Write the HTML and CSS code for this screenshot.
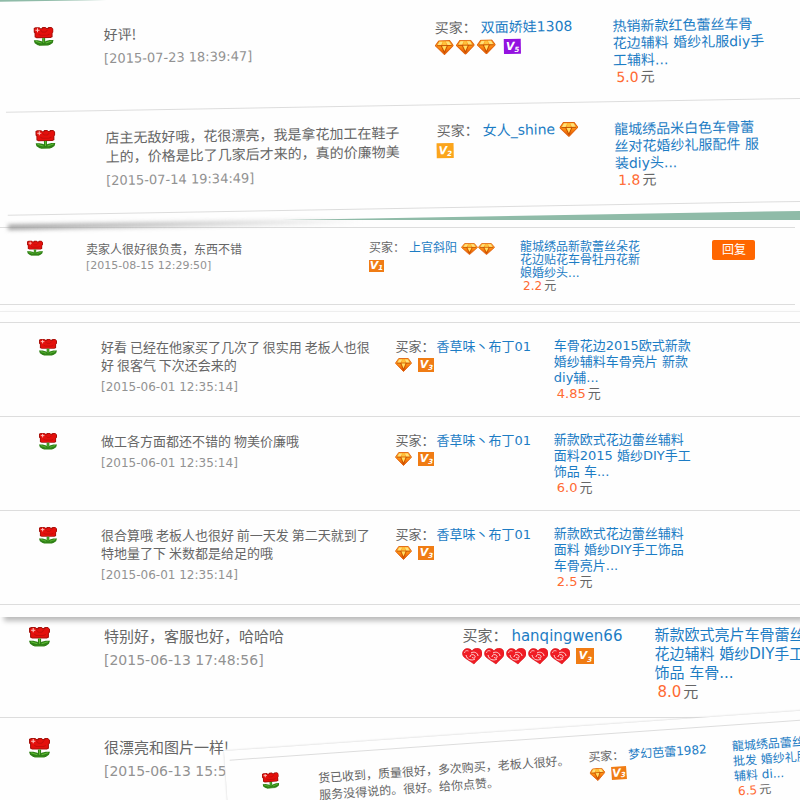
FILE: index.html
```
<!DOCTYPE html>
<html lang="zh-CN">

<head>
    <meta charset="UTF-8">
    <meta name="viewport" content="width=device-width, initial-scale=1.0">
    <title>买家评价</title>
    <link rel="stylesheet" href="styles.css">
</head>

<body>
    <!-- Icone -->
    <svg class="defs" aria-hidden="true">
        <defs>
            <linearGradient id="gold" x1="0" y1="0" x2="0" y2="1">
                <stop offset="0" stop-color="#ffb52e" />
                <stop offset="0.5" stop-color="#ff8a10" />
                <stop offset="1" stop-color="#d94a00" />
            </linearGradient>
        </defs>
        <symbol id="flower" viewBox="0 0 20 20">
            <path d="M2 1h4l1 1h1l1-1h3l1 1h1l1-1h3l2 2v3l-1 1v4l-2 1H3l-2-1V7L0 6V2z" fill="#a5120c" />
            <path d="M2 2h4l1 1h2l1-1h2l1 1h2l1-1h2l1 1v3l-1 1v3l-1 1H3L2 10V6L1 5V3z" fill="#e4100c" />
            <path d="M7 4l2 2h3l2-2M5 8l2 1h7l2-1" fill="none" stroke="#c40e0a" stroke-width="1" />
            <path d="M2 4h4M4 2v4" stroke="#ffc4bd" stroke-width="1" />
            <path d="M10 12v6" stroke="#2f8016" stroke-width="3" />
            <path d="M0 14h4l4 1 2 2 2-2 4-1h4l-1 3-3 2H4l-3-2z" fill="#2f8016" />
            <path d="M2 15l3 1 3 1M18 15l-3 1-3 1M10 12v5" fill="none" stroke="#5dbb34" stroke-width="1" />
            <path d="M5 19h10" stroke="#3a8a1c" stroke-width="1" />
        </symbol>
        <symbol id="gem" viewBox="0 0 18 15" preserveAspectRatio="none">
            <path d="M4 .5h10l3.500 5L9 14.500.5 5.500z" fill="url(#gold)" stroke="#e0640e" stroke-width="1" />
            <path d="M4.500 1.500h3L6 5H2.500zM10.500 1.500h3l2 3.500H12z" fill="#ffe27a" />
            <path d="M8 1.500h2l1 3.500H7z" fill="#ffc23c" />
            <path d="M2 5.500h14M6 5.500l3 7 3-7" fill="none" stroke="#b84a00" stroke-width=".8" />
            <path d="M7 6h4l-2 5z" fill="#ffe066" />
        </symbol>
        <symbol id="heart" viewBox="0 0 20 17" preserveAspectRatio="none">
            <path d="M10 3C8 0 4 0 2 2S0 7 2 9s6 4 10 7c2-3 6-5 7.500-8s0-7-3-7.500S11 1 10 3z" fill="#f01c24" stroke="#d4121a" stroke-width=".6" />
            <path d="M2.500 5c0-2 2-3 4-2" fill="none" stroke="#ffb0b0" stroke-width="1" />
            <path d="M4 7c1 5 6 6 9 4M9 5c3-2 7 0 7 3M8 9c0-3 4-3 5-1s-2 3-3 1" fill="none" stroke="#ffd8d8" stroke-width="1" />
        </symbol>
    </svg>

    <main class="collage">

        <section class="sheet sheet-top">
            <article class="review">
                <svg class="flower"><use href="#flower" /></svg>
                <div class="comment">
                    <p>好评!</p>
                    <time>[2015-07-23 18:39:47]</time>
                </div>
                <div class="buyer">
                    <div class="who"><span>买家：</span><a href="#">双面娇娃1308</a></div>
                    <div class="rank">
                        <svg class="gem"><use href="#gem" /></svg>
                        <svg class="gem"><use href="#gem" /></svg>
                        <svg class="gem"><use href="#gem" /></svg>
                        <span class="vip vip-purple">V<small>5</small></span>
                    </div>
                </div>
                <div class="item">
                    <a href="#">热销新款红色蕾丝车骨<br>花边辅料 婚纱礼服diy手<br>工辅料...</a>
                    <p class="price"><b>5.0</b>元</p>
                </div>
            </article>
            <article class="review">
                <svg class="flower"><use href="#flower" /></svg>
                <div class="comment">
                    <p>店主无敌好哦，花很漂亮，我是拿花加工在鞋子<br>上的，价格是比了几家后才来的，真的价廉物美</p>
                    <time>[2015-07-14 19:34:49]</time>
                </div>
                <div class="buyer">
                    <div class="who"><span>买家：</span><a href="#">女人_shine</a><svg class="gem"><use href="#gem" /></svg></div>
                    <div class="rank"><span class="vip vip-yellow">V<small>2</small></span></div>
                </div>
                <div class="item">
                    <a href="#">龍城绣品米白色车骨蕾<br>丝对花婚纱礼服配件 服<br>装diy头...</a>
                    <p class="price"><b>1.8</b>元</p>
                </div>
            </article>
        </section>

        <section class="sheet sheet-reply">
            <article class="review">
                <svg class="flower"><use href="#flower" /></svg>
                <div class="comment">
                    <p>卖家人很好很负责，东西不错</p>
                    <time>[2015-08-15 12:29:50]</time>
                </div>
                <div class="buyer">
                    <div class="who"><span>买家：</span><a href="#">上官斜阳</a><svg class="gem"><use href="#gem" /></svg><svg class="gem"><use href="#gem" /></svg></div>
                    <div class="rank"><span class="vip">V<small>1</small></span></div>
                </div>
                <div class="item">
                    <a href="#">龍城绣品新款蕾丝朵花<br>花边贴花车骨牡丹花新<br>娘婚纱头...</a>
                    <p class="price"><b>2.2</b>元</p>
                </div>
                <button class="reply-btn" type="button">回复</button>
            </article>
        </section>

        <section class="sheet sheet-middle">
            <article class="review">
                <svg class="flower"><use href="#flower" /></svg>
                <div class="comment">
                    <p>好看 已经在他家买了几次了 很实用 老板人也很<br>好 很客气 下次还会来的</p>
                    <time>[2015-06-01 12:35:14]</time>
                </div>
                <div class="buyer">
                    <div class="who"><span>买家：</span><a href="#">香草味丶布丁01</a></div>
                    <div class="rank"><svg class="gem"><use href="#gem" /></svg><span class="vip">V<small>3</small></span></div>
                </div>
                <div class="item">
                    <a href="#">车骨花边2015欧式新款<br>婚纱辅料车骨亮片 新款<br>diy辅...</a>
                    <p class="price"><b>4.85</b>元</p>
                </div>
            </article>
            <article class="review">
                <svg class="flower"><use href="#flower" /></svg>
                <div class="comment">
                    <p>做工各方面都还不错的 物美价廉哦</p>
                    <time>[2015-06-01 12:35:14]</time>
                </div>
                <div class="buyer">
                    <div class="who"><span>买家：</span><a href="#">香草味丶布丁01</a></div>
                    <div class="rank"><svg class="gem"><use href="#gem" /></svg><span class="vip">V<small>3</small></span></div>
                </div>
                <div class="item">
                    <a href="#">新款欧式花边蕾丝辅料<br>面料2015 婚纱DIY手工<br>饰品 车...</a>
                    <p class="price"><b>6.0</b>元</p>
                </div>
            </article>
            <article class="review">
                <svg class="flower"><use href="#flower" /></svg>
                <div class="comment">
                    <p>很合算哦 老板人也很好 前一天发 第二天就到了<br>特地量了下 米数都是给足的哦</p>
                    <time>[2015-06-01 12:35:14]</time>
                </div>
                <div class="buyer">
                    <div class="who"><span>买家：</span><a href="#">香草味丶布丁01</a></div>
                    <div class="rank"><svg class="gem"><use href="#gem" /></svg><span class="vip">V<small>3</small></span></div>
                </div>
                <div class="item">
                    <a href="#">新款欧式花边蕾丝辅料<br>面料 婚纱DIY手工饰品<br>车骨亮片...</a>
                    <p class="price"><b>2.5</b>元</p>
                </div>
            </article>
        </section>

        <section class="sheet sheet-bottom">
            <article class="review">
                <svg class="flower"><use href="#flower" /></svg>
                <div class="comment">
                    <p>特别好，客服也好，哈哈哈</p>
                    <time>[2015-06-13 17:48:56]</time>
                </div>
                <div class="buyer">
                    <div class="who"><span>买家：</span><a href="#">hanqingwen66</a></div>
                    <div class="rank">
                        <svg class="heart"><use href="#heart" /></svg>
                        <svg class="heart"><use href="#heart" /></svg>
                        <svg class="heart"><use href="#heart" /></svg>
                        <svg class="heart"><use href="#heart" /></svg>
                        <svg class="heart"><use href="#heart" /></svg>
                        <span class="vip">V<small>3</small></span>
                    </div>
                </div>
                <div class="item">
                    <a href="#">新款欧式亮片车骨蕾丝<br>花边辅料 婚纱DIY手工<br>饰品 车骨...</a>
                    <p class="price"><b>8.0</b>元</p>
                </div>
            </article>
            <article class="review">
                <svg class="flower"><use href="#flower" /></svg>
                <div class="comment">
                    <p>很漂亮和图片一样!</p>
                    <time>[2015-06-13 15:5</time>
                </div>
            </article>

            <!-- foglietto inclinato sopra l'angolo -->
            <div class="sheet sheet-corner">
                <article class="review">
                    <svg class="flower"><use href="#flower" /></svg>
                    <div class="comment">
                        <p>货已收到，质量很好，多次购买，老板人很好。<br>服务没得说的。很好。给你点赞。</p>
                    </div>
                    <div class="buyer">
                        <div class="who"><span>买家：</span><a href="#">梦幻芭蕾1982</a></div>
                        <div class="rank"><svg class="gem"><use href="#gem" /></svg><span class="vip">V<small>3</small></span></div>
                    </div>
                    <div class="item">
                        <a href="#">龍城绣品蕾丝<br>批发 婚纱礼服<br>辅料 di...</a>
                        <p class="price"><b>6.5</b>元</p>
                    </div>
                </article>
            </div>
        </section>

    </main>
</body>

</html>
```
FILE: styles.css
```
* {
    box-sizing: border-box;
}

body {
    margin: 0;
    font-family: "DejaVu Sans", "Noto Sans CJK SC", sans-serif;
    color: #666;
    background-color: #fff;
}

p {
    margin: 0;
}

a {
    color: #1c7cc4;
    text-decoration: none;
}

.defs {
    position: absolute;
    width: 0;
    height: 0;
}

.collage {
    position: relative;
    overflow: hidden;
    padding-top: 2px;
    background-color: #8fbba8;
}

/* Fogli */
.sheet {
    position: relative;
    background-color: #fefefe;
    font-size: var(--size);
}

.review {
    display: grid;
    grid-template-columns: var(--cols);
    align-items: start;
    height: var(--row);
    padding-top: var(--pad);
    border-bottom: 1px solid #ddd;
    white-space: nowrap;
}

.flower {
    width: var(--flower);
    height: var(--flower);
    justify-self: end;
    margin-right: var(--flower-gap);
}

.comment {
    line-height: var(--line);
}

.comment p {
    font-family: "Noto Sans CJK SC", sans-serif;
}

.comment time {
    display: block;
    margin-top: var(--time-gap);
    font-size: var(--time-size);
    color: #929292;
}

.who,
.rank {
    display: flex;
    align-items: center;
    height: var(--line);
    line-height: var(--line);
}

.who a {
    margin: 0 4px;
}

.rank {
    gap: 2px;
}

.gem {
    width: var(--gem-w);
    height: var(--gem-h);
}

.heart {
    width: 20px;
    height: 17px;
}

.item {
    line-height: var(--item-line);
}

.price {
    padding-left: 3px;
}

.price b {
    margin-right: 2px;
    font-weight: normal;
    color: #ff6a33;
}

/* Badge V */
.vip {
    display: flex;
    justify-content: center;
    align-items: center;
    width: var(--vip-w);
    height: var(--vip-h);
    background-color: #f07c14;
    color: #fff;
    font-size: 11px;
    font-weight: bold;
    font-style: italic;
    line-height: 12px;
}

.vip small {
    align-self: flex-end;
    font-size: 7px;
    line-height: 8px;
}

.gem + .vip,
.heart + .vip {
    margin-left: 4px;
}

.vip-purple {
    background-color: #9412e0;
}

.vip-yellow {
    background-color: #fba51c;
}

.sheet-top {
    --size: 14px;
    --time-size: 13px;
    --cols: 99px 41.2% 22.1% 1fr;
    --row: 103px;
    --pad: 17px;
    --line: 19px;
    --item-line: 17px;
    --time-gap: 5px;
    --flower: 20px;
    --flower-gap: 50px;
    --gem-w: 19px;
    --gem-h: 15px;
    --vip-w: 17px;
    --vip-h: 15px;
    z-index: 3;
    width: 102%;
    margin-left: -8px;
    padding: 8px 0 9px 12px;
    transform: rotate(-1deg);
    transform-origin: 0 0;
}

.sheet-top .item {
    padding-top: 2px;
}

.sheet-top .gem + .vip {
    margin-left: 6px;
}

/* ombra che svanisce verso destra */
.sheet-top::after {
    content: "";
    position: absolute;
    left: 12px;
    right: 55%;
    top: 100%;
    height: 5px;
    background: linear-gradient(to right, #999, transparent);
    filter: blur(2px);
}

.sheet-reply {
    --size: 12px;
    --time-size: 11px;
    --cols: 86px 35.6% 19% 24.2% 1fr;
    --row: 78px;
    --pad: 12px;
    --line: 17px;
    --item-line: 13px;
    --time-gap: 0px;
    --flower: 16px;
    --flower-gap: 43px;
    --gem-w: 17px;
    --gem-h: 12px;
    --vip-w: 15px;
    --vip-h: 12px;
    margin-top: -5px;
    padding: 7px 5px 6px 0;
}

.sheet-reply .review {
    border-top: 1px solid #ddd;
}

.sheet-reply .item {
    padding-top: 1px;
}

.reply-btn {
    width: 43px;
    height: 20px;
    padding: 0;
    border: none;
    border-radius: 2px;
    background-color: #ff6600;
    color: #fff;
    font-family: inherit;
    font-size: 12px;
    line-height: 20px;
    cursor: pointer;
}

.sheet-middle {
    --size: 13px;
    --time-size: 12px;
    --cols: 101px 36.8% 19.8% 1fr;
    --row: 94px;
    --pad: 15px;
    --line: 18px;
    --item-line: 16px;
    --time-gap: 4px;
    --flower: 18px;
    --flower-gap: 44px;
    --gem-w: 17px;
    --gem-h: 14px;
    --vip-w: 16px;
    --vip-h: 14px;
    z-index: 2;
    padding: 10px 0 12px;
    border-top: 1px solid #eee;
    box-shadow: 4px 4px 5px #bbb;
}

.sheet-middle .review:first-child {
    height: 95px;
    border-top: 1px solid #ddd;
}

.sheet-middle .who a {
    margin: 0 2px;
}

.sheet-bottom {
    --size: 15px;
    --time-size: 14px;
    --cols: 104px 44.8% 24% 1fr;
    --row: 113px;
    --pad: 21px;
    --line: 20px;
    --item-line: 19px;
    --time-gap: 4px;
    --flower: 21px;
    --flower-gap: 54px;
    --vip-w: 18px;
    --vip-h: 16px;
    margin-top: -12px;
}

.sheet-bottom > .review:nth-child(2) {
    height: 83px;
    padding-top: 19px;
    border-bottom: none;
}

.sheet-corner {
    --size: 12px;
    --cols: 87px 271px 144px 1fr;
    --row: 90px;
    --pad: 14px;
    --line: 17px;
    --item-line: 15px;
    --flower: 17px;
    --flower-gap: 39px;
    --gem-w: 16px;
    --gem-h: 13px;
    --vip-w: 15px;
    --vip-h: 13px;
    position: absolute;
    z-index: 1;
    top: 146px;
    left: 28%;
    width: 80%;
    padding: 9px 0 0 5px;
    box-shadow: 0 0 2px #ccc;
    transform: rotate(-4deg);
    transform-origin: 0 0;
}

.sheet-corner .review {
    border-top: 1px solid #ddd;
    border-bottom: none;
}
```
